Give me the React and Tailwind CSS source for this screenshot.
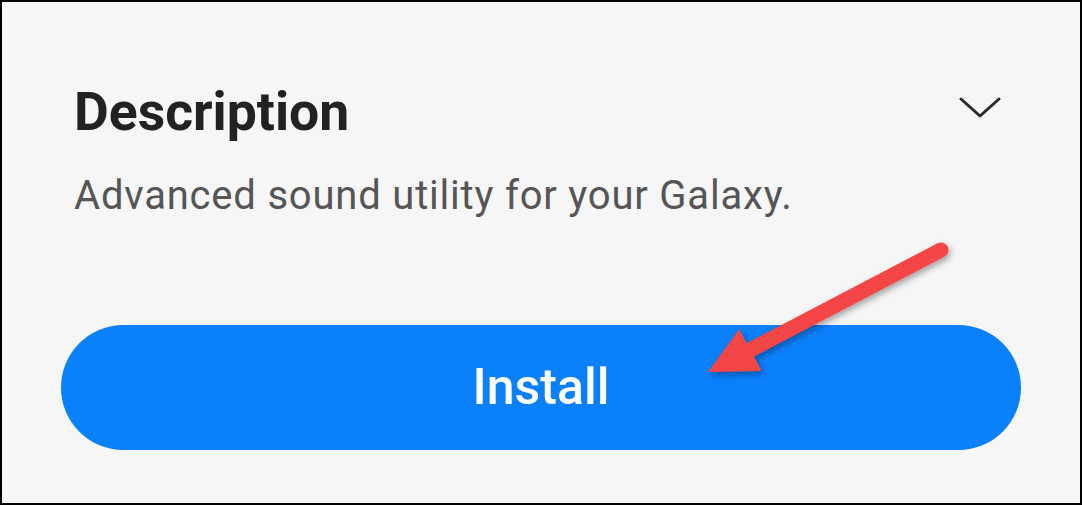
const Chevron = () => (
  <svg width="42" height="24" viewBox="0 0 42 24" fill="none" className="mb-[9px] mr-[20px]">
    <path d="M2 3 L21 20 L40 3" stroke="#2a2a2a" strokeWidth="3" strokeLinecap="round" strokeLinejoin="round" />
  </svg>
);

const Arrow = () => (
  <svg className="absolute left-0 top-0 pointer-events-none" width="1082" height="505" viewBox="0 0 1082 505">
    <defs>
      <filter id="shadow" x="-20%" y="-20%" width="140%" height="140%">
        <feDropShadow dx="2" dy="3" stdDeviation="3" floodColor="#000" floodOpacity="0.35" />
      </filter>
    </defs>
    <g filter="url(#shadow)">
      <line x1="939" y1="248" x2="748" y2="348" stroke="#f44446" strokeWidth="15" strokeLinecap="round" />
      <polygon points="708,369 737,329 758,368" fill="#f44446" stroke="#f44446" strokeWidth="2" strokeLinejoin="round" />
    </g>
  </svg>
);

export default function App() {
  return (
    <div
      className="relative w-[1082px] h-[505px] bg-[#f6f6f6] border-2 border-black overflow-hidden"
      style={{ fontFamily: "Roboto, 'Noto Sans', sans-serif" }}
    >
      <div className="px-[59px] pt-[79px]">
        <div className="flex items-center justify-between pl-[13px]">
          <h2 className="text-[53.5px] leading-[62px] font-bold text-[#222222]">Description</h2>
          <Chevron />
        </div>
        <p className="mt-[30px] pl-[13px] text-[40px] leading-[46px] tracking-[0.8px] text-[#555555]">
          Advanced sound utility for your Galaxy.
        </p>
        <button className="mt-[106px] w-[960px] h-[125px] rounded-full bg-[#0a80fb] flex items-center justify-center text-white text-[50px] font-medium">
          Install
        </button>
      </div>
      <Arrow />
    </div>
  );
}
